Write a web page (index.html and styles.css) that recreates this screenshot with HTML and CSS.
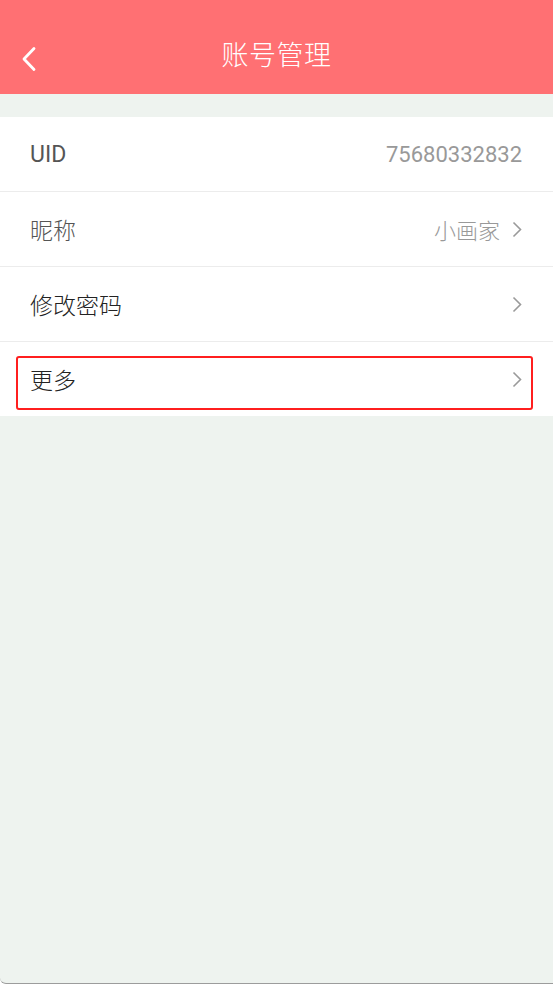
FILE: index.html
```html
<!DOCTYPE html>
<html lang="zh-CN">
<head>
<meta charset="utf-8">
<title>账号管理</title>
<link rel="stylesheet" href="styles.css">
</head>
<body>
<div class="page">
  <header class="topbar">
    <div class="back">
      <svg width="16" height="26" viewBox="0 0 16 26"><polyline points="13,2.5 3,13 13,23.5" fill="none" stroke="#fff" stroke-width="2.8" stroke-linecap="round" stroke-linejoin="round"/></svg>
    </div>
    <h1 class="title">账号管理</h1>
  </header>
  <main class="list">
    <div class="row">
      <span class="label muted latin">UID</span>
      <span class="value latin">75680332832</span>
    </div>
    <div class="row">
      <span class="label muted">昵称</span>
      <span class="right"><span class="value">小画家</span><svg class="chev" width="10" height="17" viewBox="0 0 10 17"><polyline points="1.5,1.5 8.5,8.5 1.5,15.5" fill="none" stroke="#9a9a9a" stroke-width="1.6"/></svg></span>
    </div>
    <div class="row">
      <span class="label">修改密码</span>
      <span class="right"><svg class="chev" width="10" height="17" viewBox="0 0 10 17"><polyline points="1.5,1.5 8.5,8.5 1.5,15.5" fill="none" stroke="#9a9a9a" stroke-width="1.6"/></svg></span>
    </div>
    <div class="row last">
      <span class="label">更多</span>
      <span class="right"><svg class="chev" width="10" height="17" viewBox="0 0 10 17"><polyline points="1.5,1.5 8.5,8.5 1.5,15.5" fill="none" stroke="#9a9a9a" stroke-width="1.6"/></svg></span>
      <div class="highlight"></div>
    </div>
  </main>
</div>
</body>
</html>
```
FILE: styles.css
```css
* { box-sizing: border-box; }
html, body {
  margin: 0;
  padding: 0;
  width: 553px;
  height: 984px;
  overflow: hidden;
}
body {
  font-family: Roboto, "Noto Sans CJK SC", sans-serif;
  font-weight: 300;
  background: #ffffff;
}
.page {
  width: 553px;
  height: 984px;
  background: #eef3ef;
  border-bottom: 1px solid #9c9c9c;
  border-bottom-left-radius: 6px;
  display: flex;
  flex-direction: column;
  overflow: hidden;
}
.topbar {
  height: 94px;
  background: #ff7073;
  display: flex;
  align-items: center;
  justify-content: center;
  padding-top: 13px;
  position: relative;
}
.back {
  position: absolute;
  left: 21px;
  top: 46px;
  width: 16px;
  height: 26px;
  display: flex;
}
.title {
  margin: 0;
  color: #ffffff;
  font-size: 27px;
  font-weight: 300;
  letter-spacing: 0.5px;
}
.list {
  margin-top: 23px;
  background: #ffffff;
  display: flex;
  flex-direction: column;
}
.row {
  height: 75px;
  border-bottom: 1px solid #ececec;
  display: flex;
  align-items: center;
  justify-content: space-between;
  padding: 0 31px 0 30px;
  position: relative;
}
.row.last {
  height: 74px;
  border-bottom: none;
}
.label {
  font-size: 23px;
  color: #222222;
}
.label.muted {
  color: #555555;
}
.value {
  font-size: 22px;
  color: #999999;
}
.latin {
  font-weight: 400;
}
.right {
  display: flex;
  align-items: center;
  gap: 12px;
}
.chev {
  display: block;
}
.highlight {
  position: absolute;
  left: 16px;
  right: 20px;
  top: 14px;
  bottom: 6px;
  border: 2.5px solid #ff1f1f;
  border-radius: 3px;
  pointer-events: none;
}
```
